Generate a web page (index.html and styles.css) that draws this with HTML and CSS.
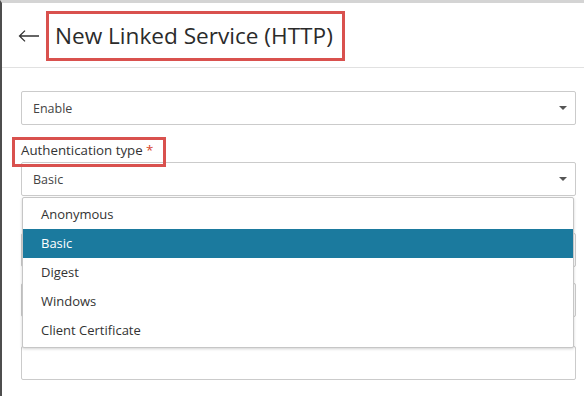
FILE: index.html
```html
<!DOCTYPE html>
<html lang="en">
<head>
<meta charset="utf-8">
<title>New Linked Service (HTTP)</title>
<link rel="stylesheet" href="styles.css">
</head>
<body>
<div class="page">
  <header class="header">
    <button class="back" aria-label="Back">
      <svg width="22" height="12" viewBox="0 0 22 12"><path d="M1.5 6H21M7 0.6L1.5 6L7 11.4" fill="none" stroke="#333" stroke-width="1.3"/></svg>
    </button>
    <h1 class="title">New Linked Service (HTTP)</h1>
  </header>
  <main class="form">
    <div class="select">
      <span class="select-value">Enable</span>
      <svg class="caret" width="8" height="4" viewBox="0 0 8 4"><path d="M0 0H8L4 4Z" fill="#555"/></svg>
    </div>
    <div class="group">
      <label class="label annotated">Authentication type <span class="req">*</span></label>
      <div class="select">
        <span class="select-value">Basic</span>
        <svg class="caret" width="8" height="4" viewBox="0 0 8 4"><path d="M0 0H8L4 4Z" fill="#555"/></svg>
      </div>
    </div>
    <div class="group">
      <div class="label-space"></div>
      <div class="input"></div>
    </div>
    <div class="group">
      <div class="input"></div>
    </div>
    <div class="group small">
      <div class="label-space"></div>
      <div class="input"></div>
    </div>
    <ul class="menu">
      <li class="item">Anonymous</li>
      <li class="item selected">Basic</li>
      <li class="item">Digest</li>
      <li class="item">Windows</li>
      <li class="item">Client Certificate</li>
    </ul>
  </main>
</div>
</body>
</html>
```
FILE: styles.css
```css
html, body {
  margin: 0;
  padding: 0;
  background: #fff;
}
body {
  font-family: "Open Sans", "Noto Sans", sans-serif;
  color: #333;
  overflow: hidden;
}
.page {
  width: 584px;
  height: 396px;
  box-sizing: border-box;
  border-top: 3px solid #d4d4d4;
  border-left: 2px solid #4e4e4e;
  overflow: hidden;
}
.header {
  height: 64px;
  border-bottom: 1px solid #e1e1e1;
  display: flex;
  align-items: center;
  padding-left: 16px;
}
.back {
  border: 0;
  background: none;
  padding: 0;
  margin: 2px 6px 0 0;
  width: 22px;
  height: 12px;
  display: flex;
}
.title {
  margin: 2px 0 0 0;
  font-weight: 400;
  font-size: 22.6px;
  color: #2b2b2b;
  border: 3px solid #d9514e;
  height: 44px;
  line-height: 44px;
  padding: 0 9px 0 6px;
  white-space: nowrap;
}
.form {
  position: relative;
  padding: 23px 8px 0 19px;
}
.select, .input {
  height: 34px;
  box-sizing: border-box;
  border: 1px solid #cbcbcb;
  border-radius: 2px;
  display: flex;
  align-items: center;
  padding: 0 8px 0 11px;
  background: #fff;
}
.select-value {
  flex: 1;
  font-size: 12.5px;
  color: #444;
}
.caret {
  display: block;
}
.group {
  margin-top: 16px;
}
.group.small {
  margin-top: 8px;
}
.label {
  position: relative;
  display: block;
  font-size: 13.3px;
  line-height: 18px;
  height: 18px;
  margin-bottom: 3px;
  color: #333;
}
.label-space {
  height: 18px;
  margin-bottom: 3px;
}
.req {
  color: #d6452a;
}
.annotated::after {
  content: "";
  position: absolute;
  left: -9px;
  top: -4px;
  width: 154px;
  height: 30px;
  box-sizing: border-box;
  border: 3px solid #d9514e;
  z-index: 2;
}
.menu {
  position: absolute;
  left: 20px;
  top: 129px;
  width: 552px;
  height: 151px;
  box-sizing: border-box;
  margin: 0;
  padding: 2px 0;
  list-style: none;
  background: #fff;
  border: 1px solid #c6c6c6;
  border-radius: 2px;
  box-shadow: 0 1px 3px rgba(0, 0, 0, 0.18);
  z-index: 1;
}
.item {
  height: 29px;
  line-height: 29px;
  padding-left: 18px;
  font-size: 13px;
  color: #333;
}
.item.selected {
  background: #1b7a9e;
  color: #fff;
}
```
